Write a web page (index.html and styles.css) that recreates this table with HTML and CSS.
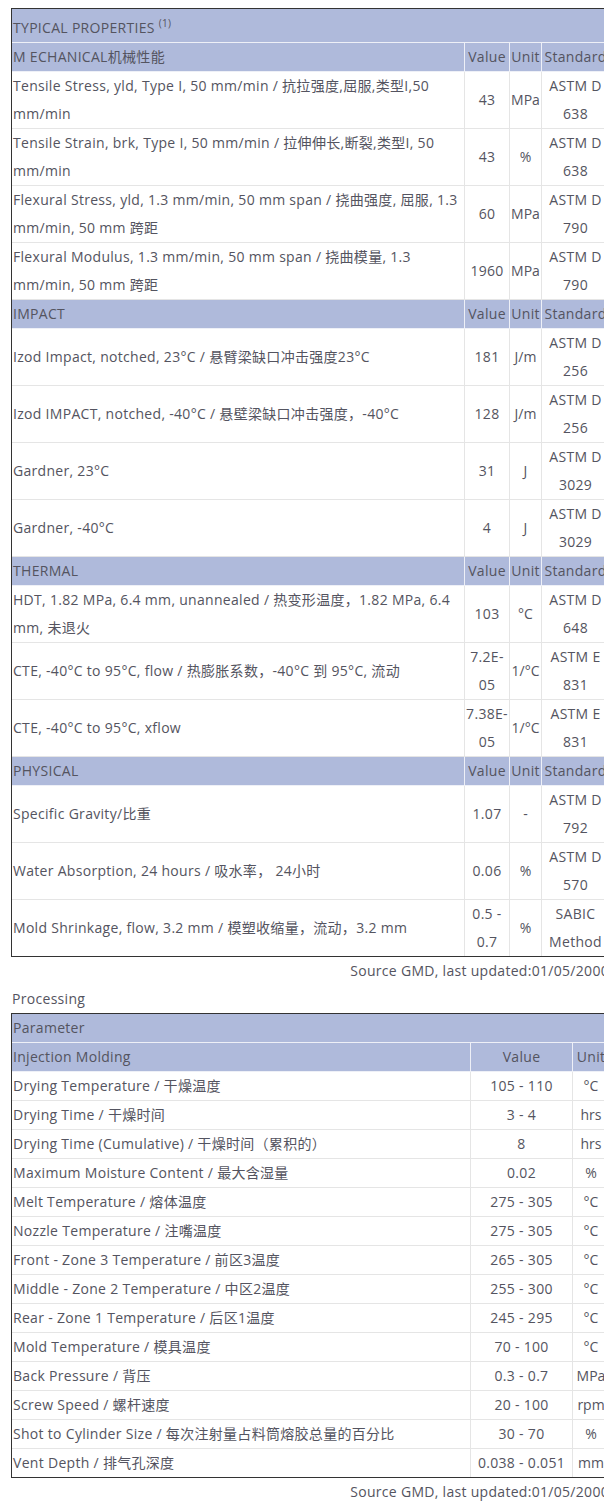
FILE: index.html
```html
<!DOCTYPE html>
<html lang="en">
<head>
    <meta charset="UTF-8">
    <meta name="viewport" content="width=device-width, initial-scale=1.0">
    <title>Typical Properties</title>
    <link rel="stylesheet" href="styles.css">
</head>
<body>
    <div class="sheet">
        <table class="props">
            <colgroup>
                <col class="col-name">
                <col class="col-value">
                <col class="col-unit">
                <col class="col-std">
            </colgroup>
            <tr class="head">
                <th colspan="4" class="title">TYPICAL PROPERTIES <sup>(1)</sup></th>
            </tr>
            <tr class="head">
                <th>M ECHANICAL机械性能</th>
                <th class="c">Value</th>
                <th class="c">Unit</th>
                <th class="c">Standard</th>
            </tr>
            <tr>
                <td>Tensile Stress, yld, Type I, 50 mm/min / 抗拉强度,屈服,类型I,50 mm/min</td>
                <td class="c">43</td>
                <td class="c u">MPa</td>
                <td class="c">ASTM D 638</td>
            </tr>
            <tr>
                <td>Tensile Strain, brk, Type I, 50 mm/min / 拉伸伸长,断裂,类型I, 50 mm/min</td>
                <td class="c">43</td>
                <td class="c u">%</td>
                <td class="c">ASTM D 638</td>
            </tr>
            <tr>
                <td>Flexural Stress, yld, 1.3 mm/min, 50 mm span / 挠曲强度, 屈服, 1.3 mm/min, 50 mm 跨距</td>
                <td class="c">60</td>
                <td class="c u">MPa</td>
                <td class="c">ASTM D 790</td>
            </tr>
            <tr>
                <td>Flexural Modulus, 1.3 mm/min, 50 mm span / 挠曲模量, 1.3 mm/min, 50 mm 跨距</td>
                <td class="c">1960</td>
                <td class="c u">MPa</td>
                <td class="c">ASTM D 790</td>
            </tr>
            <tr class="head">
                <th>IMPACT</th>
                <th class="c">Value</th>
                <th class="c">Unit</th>
                <th class="c">Standard</th>
            </tr>
            <tr>
                <td>Izod Impact, notched, 23°C / 悬臂梁缺口冲击强度23°C</td>
                <td class="c">181</td>
                <td class="c u">J/m</td>
                <td class="c">ASTM D 256</td>
            </tr>
            <tr>
                <td>Izod IMPACT, notched, -40°C / 悬壁梁缺口冲击强度，-40°C</td>
                <td class="c">128</td>
                <td class="c u">J/m</td>
                <td class="c">ASTM D 256</td>
            </tr>
            <tr>
                <td>Gardner, 23°C</td>
                <td class="c">31</td>
                <td class="c u">J</td>
                <td class="c">ASTM D 3029</td>
            </tr>
            <tr>
                <td>Gardner, -40°C</td>
                <td class="c">4</td>
                <td class="c u">J</td>
                <td class="c">ASTM D 3029</td>
            </tr>
            <tr class="head">
                <th>THERMAL</th>
                <th class="c">Value</th>
                <th class="c">Unit</th>
                <th class="c">Standard</th>
            </tr>
            <tr>
                <td>HDT, 1.82 MPa, 6.4 mm, unannealed / 热变形温度，1.82 MPa, 6.4 mm, 未退火</td>
                <td class="c">103</td>
                <td class="c u">°C</td>
                <td class="c">ASTM D 648</td>
            </tr>
            <tr>
                <td>CTE, -40°C to 95°C, flow / 热膨胀系数，-40°C 到 95°C, 流动</td>
                <td class="c">7.2E-05</td>
                <td class="c u">1/°C</td>
                <td class="c">ASTM E 831</td>
            </tr>
            <tr>
                <td>CTE, -40°C to 95°C, xflow</td>
                <td class="c">7.38E-05</td>
                <td class="c u">1/°C</td>
                <td class="c">ASTM E 831</td>
            </tr>
            <tr class="head">
                <th>PHYSICAL</th>
                <th class="c">Value</th>
                <th class="c">Unit</th>
                <th class="c">Standard</th>
            </tr>
            <tr>
                <td>Specific Gravity/比重</td>
                <td class="c">1.07</td>
                <td class="c u">-</td>
                <td class="c">ASTM D 792</td>
            </tr>
            <tr>
                <td>Water Absorption, 24 hours / 吸水率， 24小时</td>
                <td class="c">0.06</td>
                <td class="c u">%</td>
                <td class="c">ASTM D 570</td>
            </tr>
            <tr>
                <td>Mold Shrinkage, flow, 3.2 mm / 模塑收缩量，流动，3.2 mm</td>
                <td class="c">0.5 - 0.7</td>
                <td class="c u">%</td>
                <td class="c">SABIC Method</td>
            </tr>
        </table>
        <div class="source">Source GMD, last updated:01/05/2000</div>

        <div class="section-label">Processing</div>
        <table class="process">
            <colgroup>
                <col class="col-param">
                <col class="col-pvalue">
                <col class="col-punit">
            </colgroup>
            <tr class="head">
                <th colspan="3">Parameter</th>
            </tr>
            <tr class="head">
                <th>Injection Molding</th>
                <th class="c">Value</th>
                <th class="c">Unit</th>
            </tr>
            <tr><td>Drying Temperature / 干燥温度</td><td class="c">105 - 110</td><td class="c u">°C</td></tr>
            <tr><td>Drying Time / 干燥时间</td><td class="c">3 - 4</td><td class="c u">hrs</td></tr>
            <tr><td>Drying Time (Cumulative) / 干燥时间（累积的）</td><td class="c">8</td><td class="c u">hrs</td></tr>
            <tr><td>Maximum Moisture Content / 最大含湿量</td><td class="c">0.02</td><td class="c u">%</td></tr>
            <tr><td>Melt Temperature / 熔体温度</td><td class="c">275 - 305</td><td class="c u">°C</td></tr>
            <tr><td>Nozzle Temperature / 注嘴温度</td><td class="c">275 - 305</td><td class="c u">°C</td></tr>
            <tr><td>Front - Zone 3 Temperature / 前区3温度</td><td class="c">265 - 305</td><td class="c u">°C</td></tr>
            <tr><td>Middle - Zone 2 Temperature / 中区2温度</td><td class="c">255 - 300</td><td class="c u">°C</td></tr>
            <tr><td>Rear - Zone 1 Temperature / 后区1温度</td><td class="c">245 - 295</td><td class="c u">°C</td></tr>
            <tr><td>Mold Temperature / 模具温度</td><td class="c">70 - 100</td><td class="c u">°C</td></tr>
            <tr><td>Back Pressure / 背压</td><td class="c">0.3 - 0.7</td><td class="c u">MPa</td></tr>
            <tr><td>Screw Speed / 螺杆速度</td><td class="c">20 - 100</td><td class="c u">rpm</td></tr>
            <tr><td>Shot to Cylinder Size / 每次注射量占料筒熔胶总量的百分比</td><td class="c">30 - 70</td><td class="c u">%</td></tr>
            <tr><td>Vent Depth / 排气孔深度</td><td class="c">0.038 - 0.051</td><td class="c u">mm</td></tr>
        </table>
        <div class="source">Source GMD, last updated:01/05/2000</div>
    </div>
</body>
</html>
```

FILE: styles.css
```css
html, body {
    margin: 0;
    padding: 0;
    overflow-x: hidden;
}

body {
    font-family: "Open Sans", "Noto Sans CJK SC", sans-serif;
    font-size: 14px;
    line-height: 28px;
    letter-spacing: 0.3px;
    color: #545460;
    background-color: #fff;
}

.sheet {
    width: 598px;
    padding: 8px 0 0 11px;
}

table {
    width: 598px;
    table-layout: fixed;
    border-collapse: separate;
    border-spacing: 0;
    border: 1px solid #333;
}

th, td {
    padding: 0 1px;
    text-align: left;
    vertical-align: middle;
    font-weight: normal;
    border-right: 1px solid #e5e5e5;
    border-bottom: 1px solid #e5e5e5;
}

tr:last-child td {
    border-bottom: none;
}

.head th {
    background-color: #afbadb;
    border-color: #eef0f7;
    white-space: nowrap;
}

.title {
    padding-top: 5px;
}

.title sup {
    font-size: 10px;
    line-height: 0;
}

.c {
    text-align: center;
}

.u {
    white-space: nowrap;
    letter-spacing: 0;
}

.col-name { width: 453px; }
.col-value { width: 45px; }
.col-unit { width: 32px; }
.col-std { width: 68px; }

.col-param { width: 459px; }
.col-pvalue { width: 102px; }
.col-punit { width: 37px; }

.source {
    text-align: right;
}

.section-label {
    padding-left: 1px;
}
```
